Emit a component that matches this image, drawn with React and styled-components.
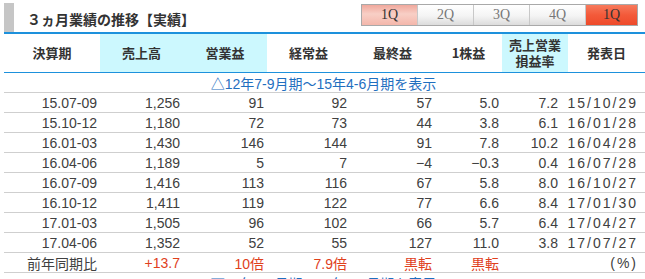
import React from "react";
import styled, { createGlobalStyle } from "styled-components";

const Global = createGlobalStyle`
  html, body { margin: 0; padding: 0; background: #fff; overflow: hidden; }
  body { font-family: "Liberation Sans", "Noto Sans CJK JP", sans-serif; }
`;

const Wrap = styled.div`
  width: 641px;
  margin-left: 4px;
`;

const TitleBar = styled.div`
  display: flex;
  align-items: flex-end;
  height: 32px;
  border-bottom: 2px solid #1d91dc;
`;

const Accent = styled.div`
  width: 10px;
  height: 29px;
  background: #c6c6c6;
`;

const Title = styled.h2`
  margin: 0 0 0 13px;
  align-self: center;
  padding-top: 6px;
  font-family: "Noto Sans CJK JP", sans-serif;
  font-size: 14px;
  font-weight: 700;
  color: #333;
  flex: 1;
`;

const Tabs = styled.div`
  display: flex;
  align-self: flex-start;
  margin-top: 4px;
  margin-right: 7px;
  border: 1px solid #a9a9a9;
  height: 20px;
`;

const Tab = styled.div`
  width: ${(p) => p.$w || 55}px;
  height: 20px;
  display: flex;
  align-items: center;
  justify-content: center;
  font-family: "Liberation Serif", serif;
  font-size: 14px;
  color: ${(p) => (p.$kind === "gray" ? "#777" : "#333")};
  border-left: ${(p) => (p.$first ? "none" : "1px solid #c8c8c8")};
  background: ${(p) =>
    p.$kind === "pink"
      ? "linear-gradient(to bottom, #f0a89c 0%, #f8cfc6 45%, #f4b7ab 100%)"
      : p.$kind === "red"
      ? "linear-gradient(to bottom, #f77a5c 0%, #f35a3a 50%, #ee4a2a 100%)"
      : "linear-gradient(to bottom, #ffffff 0%, #f4f4f4 55%, #dcdcdc 100%)"};
`;

const COLS = "96px 83px 84px 83px 85px 67px 66px 77px";

const HeadRow = styled.div`
  display: grid;
  grid-template-columns: ${COLS};
  height: 38px;
  border-bottom: 1px solid #1d91dc;
`;

const HeadCell = styled.div`
  display: flex;
  align-items: center;
  justify-content: center;
  text-align: center;
  background: ${(p) => (p.$hl ? "#ccf8fe" : "#fff")};
  font-family: "Noto Sans CJK JP", sans-serif;
  font-weight: 700;
  font-size: 13px;
  line-height: 16px;
  color: #333;
`;

const InfoRow = styled.div`
  height: 19px;
  border-bottom: 1px solid #cfcfcf;
  display: flex;
  align-items: center;
  justify-content: center;
  font-family: "Liberation Sans", "Noto Sans CJK JP", sans-serif;
  font-size: 14px;
  color: #1f6fbf;
  padding-right: 2px;
`;

const Row = styled.div`
  display: grid;
  grid-template-columns: ${COLS};
  height: 19px;
  border-bottom: 1px solid #cfcfcf;
`;

const Cell = styled.div`
  display: flex;
  align-items: center;
  justify-content: flex-end;
  padding-right: ${(p) => p.$pr ?? 3}px;
  font-family: "Liberation Sans", "Noto Sans CJK JP", sans-serif;
  font-size: 14px;
  color: ${(p) => (p.$red ? "#e0401c" : "#404040")};
  letter-spacing: ${(p) => p.$ls || 0}px;
  white-space: nowrap;
`;

const heads = [
  { t: "決算期" },
  { t: "売上高", hl: true },
  { t: "営業益", hl: true },
  { t: "経常益" },
  { t: "最終益" },
  { t: "1株益" },
  { t: ["売上営業", "損益率"], hl: true },
  { t: "発表日" },
];

const rows = [
  ["15.07-09", "1,256", "91", "92", "57", "5.0", "7.2", "15/10/29"],
  ["15.10-12", "1,180", "72", "73", "44", "3.8", "6.1", "16/01/28"],
  ["16.01-03", "1,430", "146", "144", "91", "7.8", "10.2", "16/04/28"],
  ["16.04-06", "1,189", "5", "7", "−4", "−0.3", "0.4", "16/07/28"],
  ["16.07-09", "1,416", "113", "116", "67", "5.8", "8.0", "16/10/27"],
  ["16.10-12", "1,411", "119", "122", "77", "6.6", "8.4", "17/01/30"],
  ["17.01-03", "1,505", "96", "102", "66", "5.7", "6.4", "17/04/27"],
  ["17.04-06", "1,352", "52", "55", "127", "11.0", "3.8", "17/07/27"],
];

const yoy = ["前年同期比", "+13.7", "10倍", "7.9倍", "黒転", "黒転", "", "(%)"];

function DataCell({ i, v, red }) {
  const pr = i === 6 ? 10 : i === 7 ? 7 : 3;
  const ls = i === 7 && !red ? 2 : 0;
  return (
    <Cell $pr={pr} $ls={ls} $red={red}>
      {v}
    </Cell>
  );
}

export default function App() {
  return (
    <>
      <Global />
      <Wrap>
        <TitleBar>
          <Accent />
          <Title>３ヵ月業績の推移【実績】</Title>
          <Tabs>
            <Tab $kind="pink" $first>1Q</Tab>
            <Tab $kind="gray">2Q</Tab>
            <Tab $kind="gray">3Q</Tab>
            <Tab $kind="gray">4Q</Tab>
            <Tab $kind="red" $w={51}>1Q</Tab>
          </Tabs>
        </TitleBar>
        <HeadRow>
          {heads.map((h, i) => (
            <HeadCell key={i} $hl={h.hl}>
              {Array.isArray(h.t) ? (
                <span>
                  {h.t[0]}
                  <br />
                  {h.t[1]}
                </span>
              ) : (
                h.t
              )}
            </HeadCell>
          ))}
        </HeadRow>
        <InfoRow>△12年7-9月期～15年4-6月期を表示</InfoRow>
        {rows.map((r, ri) => (
          <Row key={ri}>
            {r.map((v, i) => (
              <DataCell key={i} i={i} v={v} />
            ))}
          </Row>
        ))}
        <Row>
          {yoy.map((v, i) => (
            <DataCell key={i} i={i} v={v} red={i > 0 && i < 7} />
          ))}
        </Row>
        <InfoRow>▽12年7-9月期～15年4-6月期を表示</InfoRow>
      </Wrap>
    </>
  );
}
